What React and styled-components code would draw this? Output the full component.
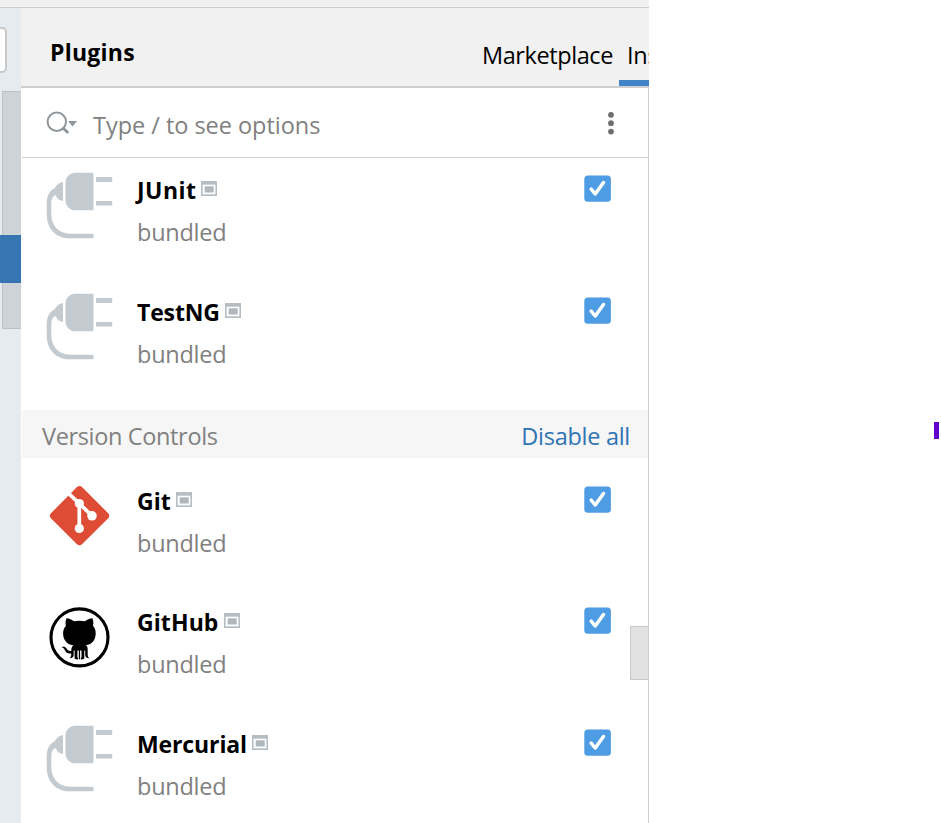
import React from "react";
import styled, { createGlobalStyle } from "styled-components";

const GlobalStyle = createGlobalStyle`
  * { box-sizing: border-box; }
  body { margin: 0; background: #fff; font-family: "Open Sans", "Noto Sans", sans-serif; }
`;

const Page = styled.div`
  position: relative;
  display: flex;
  width: 941px;
  height: 823px;
  overflow: hidden;
  background: #fff;
`;
const Window = styled.div`
  width: 649px;
  height: 823px;
  display: flex;
  flex-direction: column;
  overflow: hidden;
`;
const TitleEdge = styled.div`
  flex: 0 0 8px;
  background: #f1f1f1;
  border-bottom: 1px solid #cecece;
`;
const Body = styled.div`
  flex: 1;
  display: flex;
  min-height: 0;
`;
const Sidebar = styled.div`
  flex: 0 0 21px;
  display: flex;
  flex-direction: column;
  background: #e6ebef;
`;
const SearchEnd = styled.div`
  width: 7px;
  height: 46px;
  margin-top: 19px;
  background: #fff;
  border: 2px solid #c6c8ca;
  border-left: 0;
  border-radius: 0 5px 5px 0;
`;
const SideThumb = styled.div`
  height: 238px;
  margin: 18px 0 0 2px;
  padding-top: 143px;
  background: #ced3d8;
  border: 1px solid #bcc0c4;
  border-right: 0;
`;
const Selected = styled.div`
  height: 48px;
  margin-left: -3px;
  background: #3675b2;
`;
const Panel = styled.div`
  flex: 1;
  min-width: 0;
  display: flex;
  flex-direction: column;
  background: #fff;
`;
const Header = styled.div`
  flex: 0 0 80px;
  display: flex;
  justify-content: space-between;
  background: #f1f1f1;
  border-bottom: 2px solid #cfcfcf;
`;
const Label = styled.span`
  display: block;
  white-space: nowrap;
  font-size: ${(p) => p.$size || 23.5}px;
  line-height: 32px;
  font-weight: ${(p) => (p.$bold ? 700 : 400)};
  letter-spacing: ${(p) => p.$track || 0}px;
  color: ${(p) => p.$color || "#000"};
`;
const Title = styled.div`
  padding: 28px 0 0 29px;
`;
const Tabs = styled.div`
  display: flex;
  width: 167px;
  overflow: hidden;
`;
const Tab = styled.div`
  flex: 0 0 ${(p) => p.$width}px;
  padding: 31px 0 0 ${(p) => p.$pad}px;
  border-bottom: ${(p) => (p.$active ? "6px solid #4083c9" : "0")};
`;
const Content = styled.div`
  flex: 1;
  min-height: 0;
  display: flex;
  flex-direction: column;
  margin-left: 1px;
  border-right: 1px solid #cfcfcf;
  position: relative;
`;
const SearchBar = styled.div`
  flex: 0 0 70px;
  display: flex;
  align-items: flex-start;
  border-bottom: 1px solid #cfcfcf;
`;
const SearchIcon = styled.svg`
  width: 32px;
  height: 26px;
  margin: 22px 15px 0 24px;
`;
const Prompt = styled.div`
  flex: 1;
  padding-top: 21px;
`;
const Dots = styled.svg`
  width: 8px;
  height: 24px;
  margin: 23px 33px 0 0;
`;
const Row = styled.div`
  flex: 0 0 ${(p) => p.$height}px;
  display: flex;
  align-items: flex-start;
`;
const Logo = styled.svg`
  flex: none;
  width: 68px;
  height: 68px;
  margin: ${(p) => p.$top}px 23px 0 24px;
`;
const Info = styled.div`
  flex: 1;
  display: flex;
  flex-direction: column;
  gap: 10px;
  padding-top: 16px;
`;
const NameLine = styled.div`
  display: flex;
  gap: 5px;
`;
const Badge = styled.svg`
  width: 16px;
  height: 15px;
  margin-top: 7px;
`;
const Check = styled.svg`
  width: 27px;
  height: 27px;
  margin: 17px 37px 0 0;
`;
const Section = styled.div`
  flex: 0 0 48px;
  display: flex;
  justify-content: space-between;
  margin: 8px 0 11px;
  padding: 10px 18px 0 20px;
  background: #f6f6f6;
`;
const ScrollThumb = styled.div`
  position: absolute;
  right: 0;
  top: 538px;
  width: 18px;
  height: 54px;
  background: #e2e2e2;
  border: 1px solid #c9c9c9;
  border-right: 0;
`;
const Caret = styled.div`
  position: absolute;
  left: 934px;
  top: 422px;
  width: 5px;
  height: 17px;
  background: #6200cc;
`;

function PlugLogo({ top }) {
  return (
    <Logo $top={top} viewBox="0 0 68 68" fill="#c3cad0">
      <path d="M29 .8H47.5V38.2H29A9.5 9.5 0 0 1 19.5 28.7V10.3A9.5 9.5 0 0 1 29 .8Z" />
      <path d="M50 5H66.2V10H50ZM50 29H66.2V33.5H50Z" />
      <path d="M17 10C12 11 10 14 9 16C3 19 .7 24 .7 32V42C.7 56 9 66 23 66.3H47.5V61.7H24C12 61.5 5.3 53 5.3 42V31C5.3 27 6.5 24.5 9.5 23C11 26.5 13 28.5 17 29Z" />
    </Logo>
  );
}

function GitLogo({ top }) {
  return (
    <Logo $top={top} viewBox="0 0 68 68">
      <path d="M31 5.1Q33.5 2.9 36 5.1L62.2 31.3Q64.4 33.8 62.2 36.3L36 62.2Q33.5 64.4 31 62.2L4.9 36.3Q2.8 33.8 4.9 31.3Z" fill="#de4c36" />
      <path d="M21.5 10.3L33.3 21.5L46 33.8M33.3 21.5V46.5" fill="none" stroke="#fff" strokeWidth="3.7" />
      <g fill="#fff">
        <circle cx="33.3" cy="21.5" r="4.6" />
        <circle cx="46" cy="33.8" r="4.8" />
        <circle cx="33.3" cy="46.4" r="4.6" />
      </g>
    </Logo>
  );
}

function GitHubLogo({ top }) {
  return (
    <Logo $top={top} viewBox="0 0 68 68">
      <circle cx="33.5" cy="33.4" r="28.5" fill="#fff" stroke="#000" strokeWidth="3.1" />
      <path d="M20.5 14.3C23 14.2 26 16 28.1 17.3Q33.4 16.1 38.8 17.3C41 16 44 14.2 46.4 14.3C47.5 17 47.6 19.4 47 21.7C49.6 24.7 50.2 28 49.4 32.5C48 39 43.6 41 37.8 41.6H29C23.2 41 18.9 39 17.4 32.5C16.6 28 17.3 24.7 19.9 21.7C19.3 19.4 19.4 17 20.5 14.3Z" />
      <path d="M28 40.8H39.5C41.7 42.2 41.7 44 41.7 47V51C41.7 52.7 42.3 53.2 43.3 54.2C40.3 54.2 39.2 53 39.2 50.7V46.4H38.3V54.5C37.4 55.3 36 55.5 34.7 55.5L35.5 52.7V46.4H34.1V55.3H32.8V46.4H31.4V52.7L32.2 55.5C30.9 55.5 29.5 55.3 28.6 54.5V46.4H27.7V50.7C27.7 53 26.6 54.2 23.6 54.2C24.6 53.2 25.2 52.7 25.2 51V49.4C20.5 50.1 19.7 47.8 18.5 45.6C17.7 44.2 16.7 43.7 15.5 43.1C17.8 42.3 19.5 42.7 20.8 44.8C21.8 46.4 23.2 47.4 25.3 46.8C25.3 44.1 25.9 42.2 28 40.8Z" />
    </Logo>
  );
}

const logos = { plug: PlugLogo, git: GitLogo, github: GitHubLogo };

function Plugin({ name, track, logo = "plug", top, height }) {
  const Picture = logos[logo];
  return (
    <Row $height={height}>
      <Picture top={top} />
      <Info>
        <NameLine>
          <Label $bold $size={23} $track={track}>{name}</Label>
          <Badge viewBox="0 0 16 15">
            <path d="M0 0H16V15H0Z" fill="#b5bec4" />
            <path d="M1.6 3.7H14.4V13.3H1.6Z" fill="#fff" />
            <path d="M3.7 5.3H12.7V11.5H3.7Z" fill="#aeb7bd" />
          </Badge>
        </NameLine>
        <Label $color="#808080" $track={-0.25}>bundled</Label>
      </Info>
      <Check viewBox="0 0 27 27">
        <rect x=".3" y=".5" width="26.6" height="26.3" rx="3.5" fill="#4e9ce3" />
        <path d="M7.2 14.2L11.2 19L19.5 7.5" fill="none" stroke="#fff" strokeWidth="3.5" strokeLinecap="round" strokeLinejoin="round" />
      </Check>
    </Row>
  );
}

export default function App() {
  return (
    <Page>
      <GlobalStyle />
      <Window>
        <TitleEdge />
        <Body>
          <Sidebar>
            <SearchEnd />
            <SideThumb><Selected /></SideThumb>
          </Sidebar>
          <Panel>
            <Header>
              <Title><Label $bold $size={23} $track={0.25}>Plugins</Label></Title>
              <Tabs>
                <Tab $width={137} $pad={0}><Label $track={-0.42}>Marketplace</Label></Tab>
                <Tab $width={100} $pad={8} $active><Label $track={-0.3}>Installed</Label></Tab>
              </Tabs>
            </Header>
            <Content>
              <SearchBar>
                <SearchIcon viewBox="0 0 32 26" fill="none">
                  <circle cx="10.8" cy="11.8" r="9.2" stroke="#90979c" strokeWidth="2" />
                  <path d="M16.5 17.5L22.2 23" stroke="#90979c" strokeWidth="3" />
                  <path d="M22 11H31L26.5 16.5Z" fill="#90979c" />
                </SearchIcon>
                <Prompt><Label $color="#808080" $track={-0.03}>Type / to see options</Label></Prompt>
                <Dots viewBox="0 0 8 24" fill="#6e6e6e">
                  <circle cx="4" cy="3.8" r="2.9" />
                  <circle cx="4" cy="12.2" r="2.9" />
                  <circle cx="4" cy="20.6" r="2.9" />
                </Dots>
              </SearchBar>
              <Plugin name="JUnit" track={0.45} top={14} height={122} />
              <Plugin name="TestNG" track={-0.15} top={13} height={122} />
              <Section>
                <Label $color="#808080" $track={-0.35}>Version Controls</Label>
                <Label $color="#2f73b3" $track={-0.28}>Disable all</Label>
              </Section>
              <Plugin name="Git" logo="git" top={13} height={121} />
              <Plugin name="GitHub" track={0.1} logo="github" top={14} height={122} />
              <Plugin name="Mercurial" track={-0.12} top={13} height={122} />
              <ScrollThumb />
            </Content>
          </Panel>
        </Body>
      </Window>
      <Caret />
    </Page>
  );
}
